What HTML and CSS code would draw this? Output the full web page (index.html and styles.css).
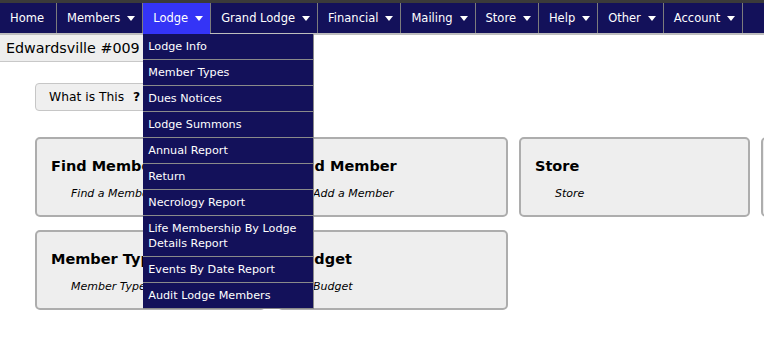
FILE: index.html
```html
<!DOCTYPE html>
<html lang="en">
  <head>
    <meta charset="UTF-8" />
    <meta name="viewport" content="width=device-width, initial-scale=1.0" />
    <title>Lodge - Edwardsville #009</title>
    <link rel="stylesheet" href="styles.css">
  </head>
  <body>
    <nav class="top-nav">
      <ul class="menu">
        <li class="menu-item menu-home"><a href="#">Home</a></li>
        <li class="menu-item"><a href="#">Members<span class="caret"></span></a></li>
        <li class="menu-item is-open">
          <a href="#">Lodge<span class="caret"></span></a>
          <!-- open submenu -->
          <ul class="submenu">
            <li><a href="#">Lodge Info</a></li>
            <li><a href="#">Member Types</a></li>
            <li><a href="#">Dues Notices</a></li>
            <li><a href="#">Lodge Summons</a></li>
            <li><a href="#">Annual Report</a></li>
            <li><a href="#">Return</a></li>
            <li><a href="#">Necrology Report</a></li>
            <li><a href="#">Life Membership By Lodge Details Report</a></li>
            <li><a href="#">Events By Date Report</a></li>
            <li><a href="#">Audit Lodge Members</a></li>
          </ul>
        </li>
        <li class="menu-item"><a href="#">Grand Lodge<span class="caret"></span></a></li>
        <li class="menu-item"><a href="#">Financial<span class="caret"></span></a></li>
        <li class="menu-item"><a href="#">Mailing<span class="caret"></span></a></li>
        <li class="menu-item"><a href="#">Store<span class="caret"></span></a></li>
        <li class="menu-item"><a href="#">Help<span class="caret"></span></a></li>
        <li class="menu-item"><a href="#">Other<span class="caret"></span></a></li>
        <li class="menu-item"><a href="#">Account<span class="caret"></span></a></li>
      </ul>
    </nav>

    <h1 class="lodge-title">Edwardsville #009</h1>

    <main class="content">
      <button type="button" class="btn-help">What is This <b>?</b></button>

      <div class="tiles">
        <a class="tile" href="#">
          <h3>Find Member</h3>
          <p>Find a Member</p>
        </a>
        <a class="tile" href="#">
          <h3>Add Member</h3>
          <p>Add a Member</p>
        </a>
        <a class="tile" href="#">
          <h3>Store</h3>
          <p>Store</p>
        </a>
        <a class="tile" href="#">
          <h3>Reports</h3>
          <p>Reports</p>
        </a>
        <a class="tile" href="#">
          <h3>Member Types</h3>
          <p>Member Types</p>
        </a>
        <a class="tile" href="#">
          <h3>Budget</h3>
          <p>Budget</p>
        </a>
      </div>
    </main>
  </body>
</html>
```

FILE: styles.css
```css
* {
  box-sizing: border-box;
}

html,
body {
  overflow: hidden;
}

body {
  margin: 0;
  font-family: "DejaVu Sans", Verdana, sans-serif;
  color: #000;
  background-color: #fff;
}

a {
  color: inherit;
  text-decoration: none;
}

/* top navigation */
.top-nav {
  background-color: #13115a;
  border-top: 3px solid #3a3a3a;
  border-bottom: 2px solid #bdbdbd;
}

.menu {
  display: flex;
  margin: 0;
  padding: 0;
  list-style: none;
}

.menu-item {
  position: relative;
  border-right: 1px solid #7c7c7c;
}

.menu-item > a {
  display: flex;
  align-items: center;
  height: 30px;
  padding: 0 7px 0 10px;
  color: #fff;
  font-size: 11.5px;
  white-space: nowrap;
}

.menu-home > a {
  padding-right: 12px;
}

/* active tab runs down into its submenu */
.menu-item.is-open > a {
  background-color: #3434f6;
  box-shadow: 0 1px 0 #3434f6;
}

.caret {
  display: inline-block;
  margin-left: 7px;
  border-left: 4.5px solid transparent;
  border-right: 4.5px solid transparent;
  border-top: 5px solid #fff;
}

.submenu {
  position: absolute;
  top: calc(100% + 1px);
  left: 0;
  z-index: 10;
  width: 171px;
  margin: 0;
  padding: 0;
  list-style: none;
  background-color: #13115a;
  border-right: 1px solid #8a8a8a;
}

.submenu li {
  border-bottom: 1px solid #8a8a8a;
}

.submenu a {
  display: block;
  padding: 5px 5px;
  color: #fff;
  font-size: 11.2px;
  line-height: 15px;
}

/* page title */
.lodge-title {
  display: inline-block;
  margin: 0;
  padding: 0 6px 0 6px;
  font-size: 14.3px;
  font-weight: normal;
  line-height: 26px;
  background-color: #eee;
  border-bottom: 1px solid #c8c8c8;
}

.content {
  padding: 21px 0 0 35px;
}

.btn-help {
  display: block;
  height: 28px;
  padding: 0 14px 0 13px;
  font-family: inherit;
  font-size: 12.3px;
  line-height: 26px;
  color: #000;
  background-color: #efefef;
  border: 1px solid #c6c6c6;
  border-radius: 4px;
}

.btn-help b {
  margin-left: 5px;
}

/* shortcut tiles */
.tiles {
  display: grid;
  grid-template-columns: repeat(4, 231px);
  grid-auto-rows: 80px;
  column-gap: 11px;
  row-gap: 13px;
  margin-top: 26px;
}

.tile {
  display: block;
  padding: 18px 14px 0;
  background-color: #eee;
  border: 2px solid #adadad;
  border-radius: 5px;
}

.tile h3 {
  margin: 0;
  font-size: 14.5px;
  line-height: 18px;
}

.tile p {
  margin: 12px 0 0 20px;
  font-size: 11px;
  font-style: italic;
  line-height: 14px;
}
```
